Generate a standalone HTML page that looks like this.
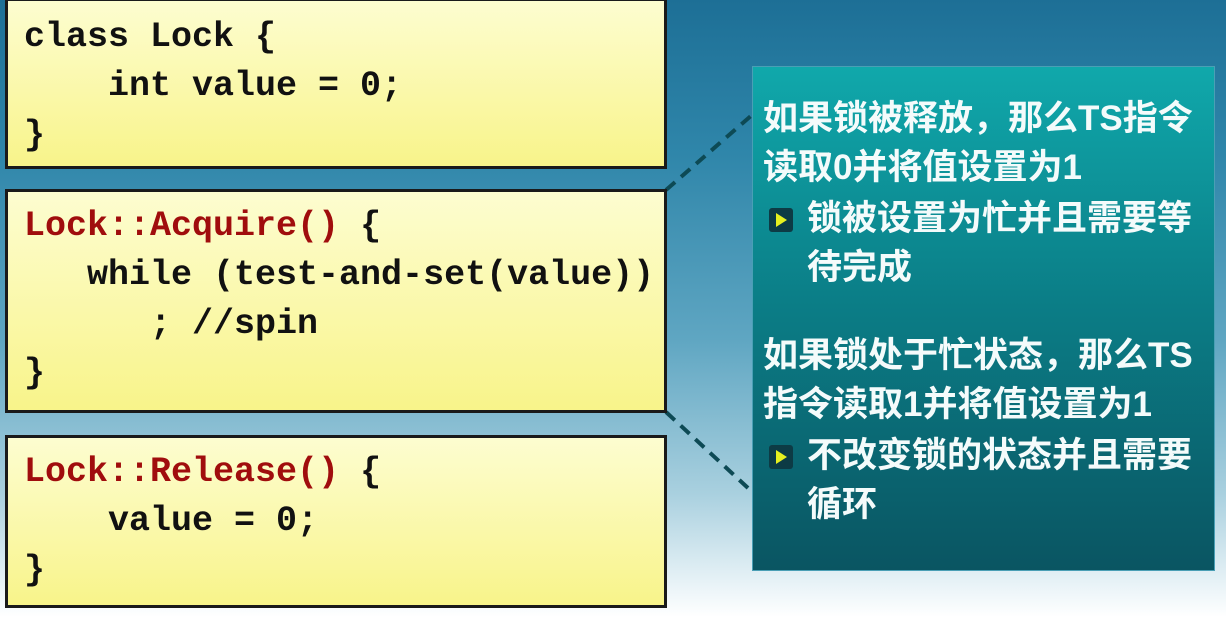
<!DOCTYPE html>
<html><head><meta charset="utf-8"><style>
body{margin:0;width:1226px;height:617px;overflow:hidden;position:relative;
background:linear-gradient(180deg,#1d6f96 0%,#2f86aa 25%,#5fa6c2 55%,#a9d0df 80%,#eef6f9 96%,#fff 100%);}
.box{position:absolute;left:5px;width:662px;border:3px solid #1a1a1a;
background:linear-gradient(180deg,#fdfdd0,#f8f48a);box-sizing:border-box;
font-family:"Liberation Mono",monospace;font-weight:bold;font-size:35px;line-height:49px;color:#111;white-space:pre;padding:6px 0 0 16px}
.r{color:#a00d0d}
.panel{position:absolute;left:752px;top:66px;width:463px;height:505px;border:1px solid #4a9fb5;box-sizing:border-box;
background:linear-gradient(180deg,#10a8ab 0%,#0b7f88 45%,#0a5562 100%);
font-family:"Liberation Sans","Noto Sans CJK SC",sans-serif;font-weight:bold;font-size:35px;line-height:49px;color:#f4fbfb;white-space:nowrap}
.p{position:absolute;left:10px;width:450px}
.b{position:absolute;left:16px;width:24px;height:24px;background:#0d3b45;border-radius:3px}
.b:after{content:"";position:absolute;left:7px;top:5px;border-left:11px solid #e6f020;border-top:7px solid transparent;border-bottom:7px solid transparent}
</style></head><body>
<svg style="position:absolute;left:0;top:0" width="1226" height="617">
<line x1="666" y1="190" x2="752" y2="115" stroke="#0d4a55" stroke-width="4" stroke-dasharray="12,8"/>
<line x1="666" y1="412" x2="748" y2="488" stroke="#0d4a55" stroke-width="4" stroke-dasharray="12,8"/>
</svg>
<div class="box" style="top:-2px;height:171px;padding-top:12px">class Lock {
    int value = 0;
}</div>
<div class="box" style="top:189px;height:224px;padding-top:10px"><span class="r">Lock::Acquire()</span> {
   while (test-and-set(value))
      ; //spin
}</div>
<div class="box" style="top:435px;height:173px;padding-top:10px"><span class="r">Lock::Release()</span> {
    value = 0;
}</div>
<div class="panel">
<div class="p" style="top:27px">如果锁被释放，那么TS指令<br>读取0并将值设置为1</div>
<div class="b" style="top:141px"></div>
<div class="p" style="left:54px;top:127px;width:400px">锁被设置为忙并且需要等<br>待完成</div>
<div class="p" style="top:264px">如果锁处于忙状态，那么TS<br>指令读取1并将值设置为1</div>
<div class="b" style="top:378px"></div>
<div class="p" style="left:54px;top:364px;width:400px">不改变锁的状态并且需要<br>循环</div>
</div>
</body></html>
